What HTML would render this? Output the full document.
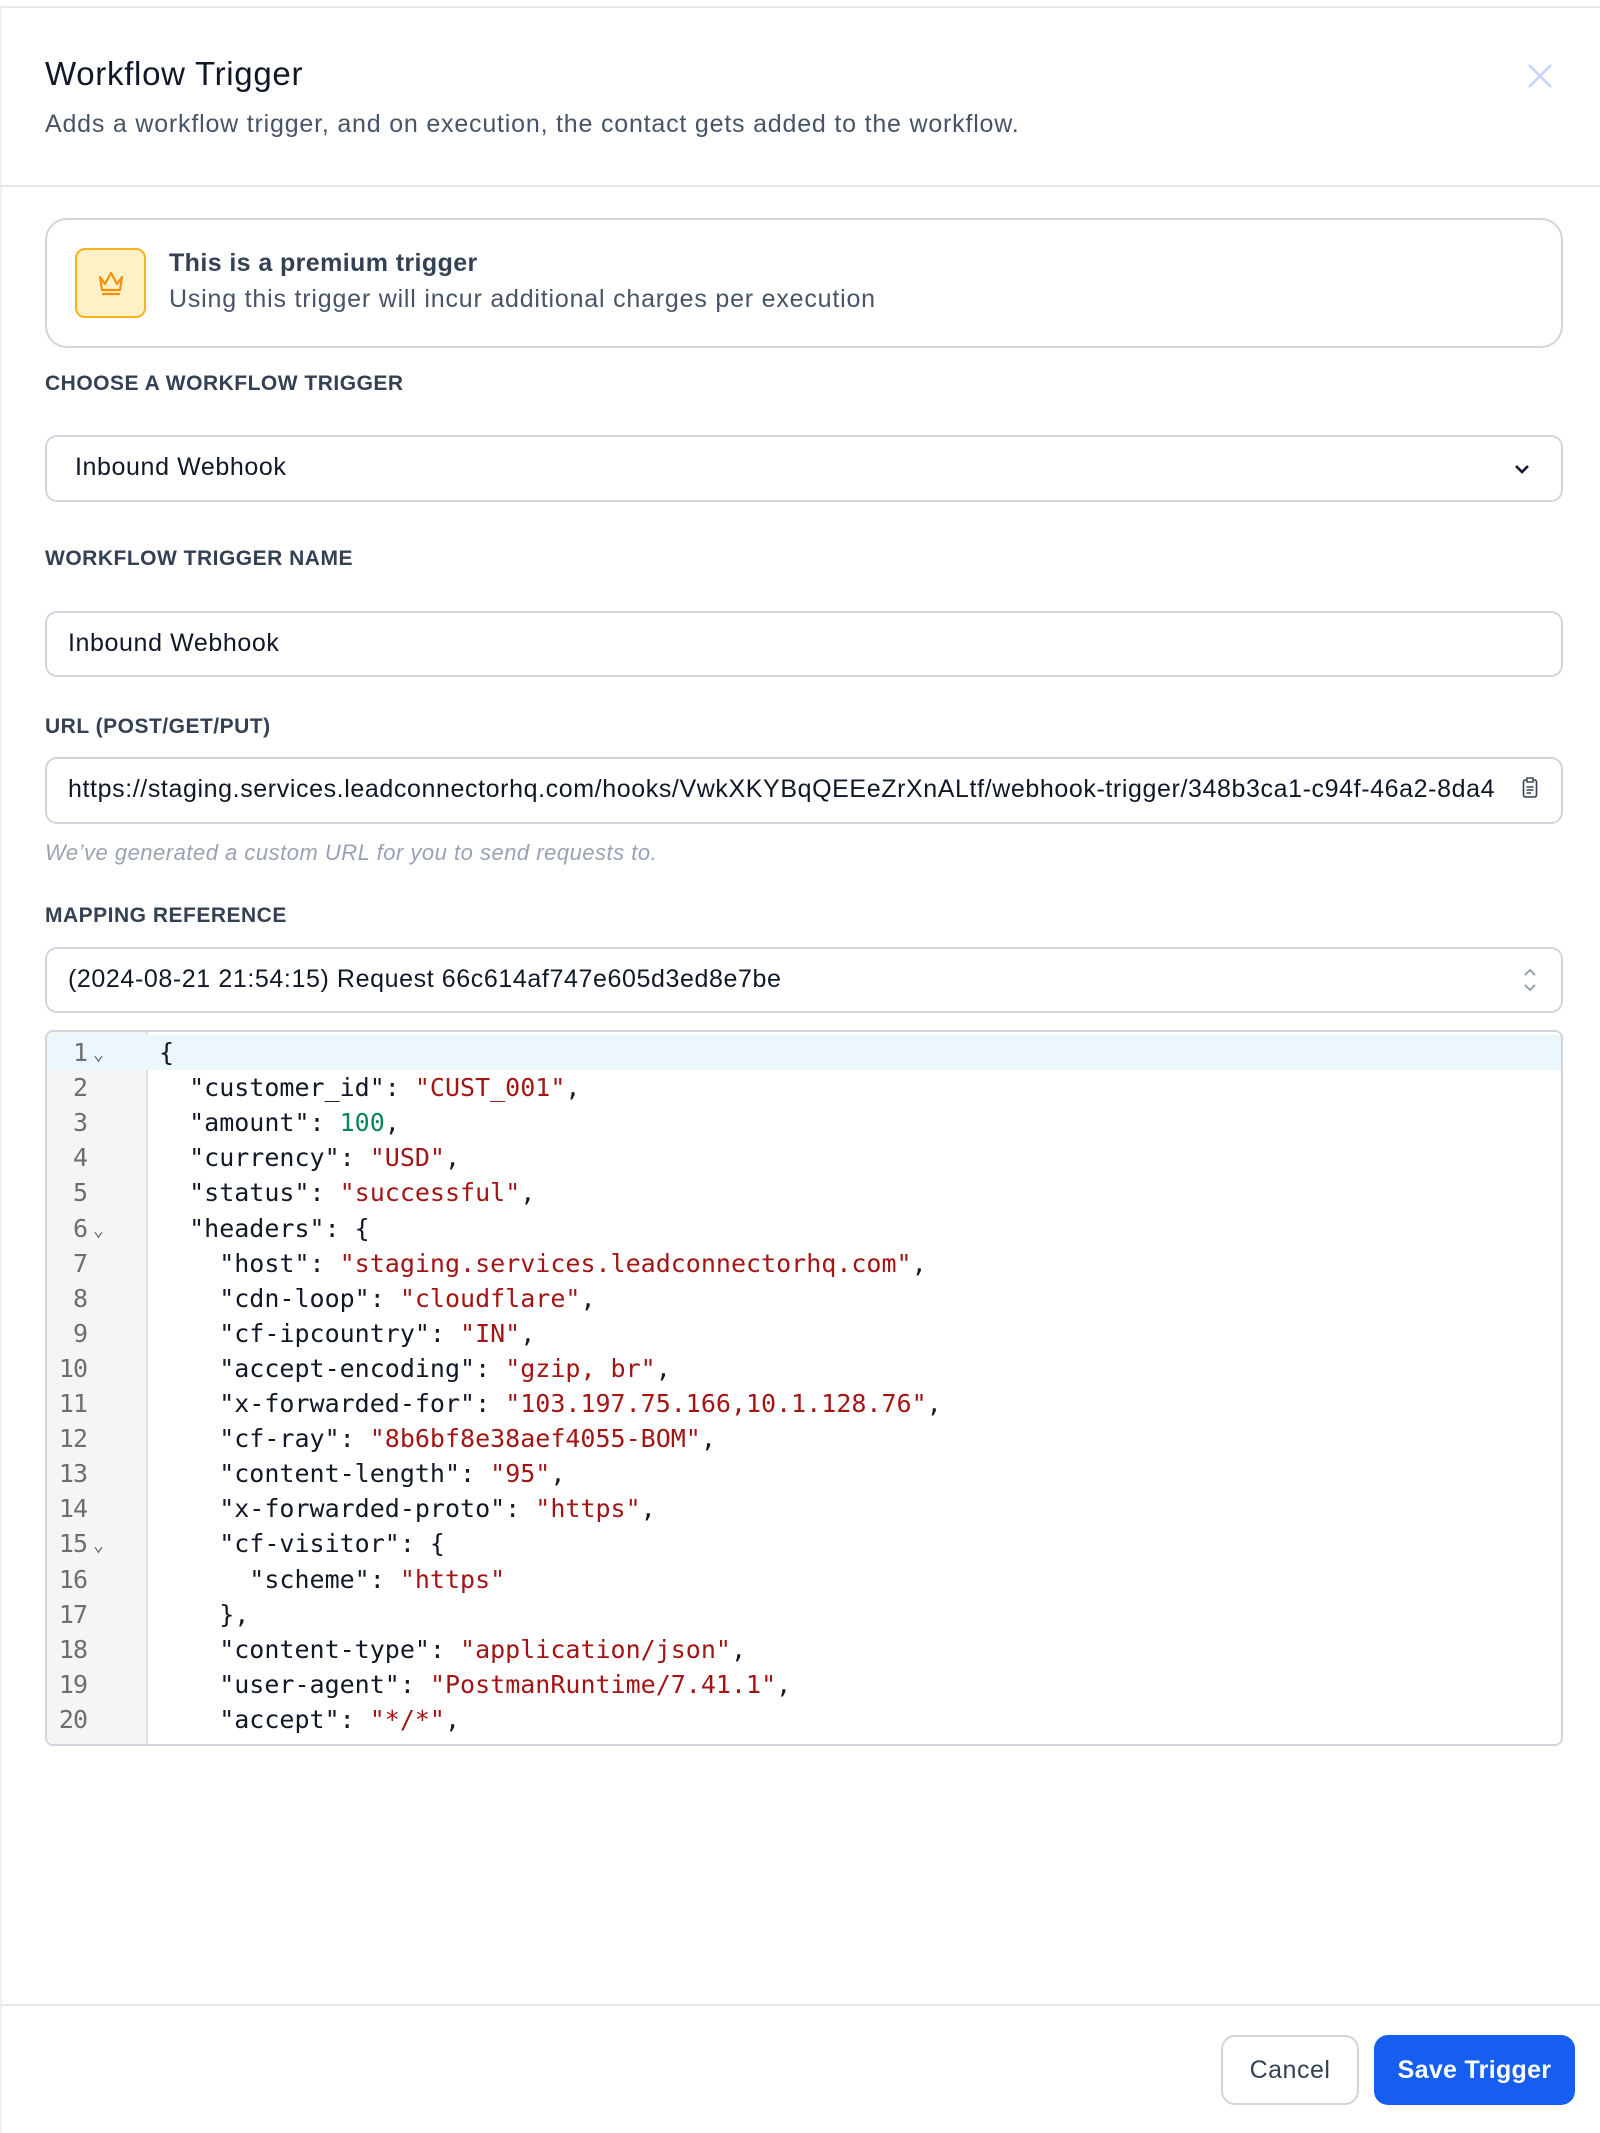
<!DOCTYPE html>
<html><head><meta charset="utf-8"><style>
*{box-sizing:border-box;margin:0;padding:0}
body{width:1600px;height:2133px;background:#fff;font-family:"Liberation Sans",sans-serif;position:relative;overflow:hidden;color:#111827}
.abs{position:absolute}
.topline{left:0;top:6px;width:1600px;height:2px;background:#e5e7eb}
.leftline{left:0;top:6px;width:2px;height:2127px;background:#eef0f3}
.title{left:45px;top:55px;font-size:33px;color:#101828;letter-spacing:0.7px}
.sub{left:45px;top:110px;font-size:25px;color:#475467;letter-spacing:0.8px}
.sep{left:0;width:1600px;height:2px;background:#e5e7eb}
.box{left:45px;width:1518px;border:2px solid #d0d5dd;border-radius:12px;background:#fff}
.label{left:45px;font-size:21px;font-weight:bold;color:#344054;letter-spacing:.5px}
.txt{font-size:25px;color:#101828;white-space:nowrap;letter-spacing:0.6px}
.code{left:45px;top:1030px;width:1518px;height:716px;border:2px solid #d0d5dd;border-radius:8px;overflow:hidden;font-family:"DejaVu Sans Mono","Liberation Mono",monospace;font-size:25px}
.gut{position:absolute;left:0;top:0;width:101px;height:100%;background:#f5f5f5;border-right:2px solid #ddd}
.ln{position:absolute;height:35px;line-height:35px;white-space:pre}
.num{left:0;width:40px;text-align:right;color:#6e6e6e;font-size:25px;letter-spacing:-1px}
.s{color:#a31515}.n{color:#098658}
</style></head><body>
<div class="abs topline"></div><div class="abs leftline"></div>
<div class="abs title">Workflow Trigger</div>
<div class="abs sub">Adds a workflow trigger, and on execution, the contact gets added to the workflow.</div>
<svg class="abs" style="left:1526px;top:62px" width="28" height="28" viewBox="0 0 28 28"><path d="M3 3L25 25M25 3L3 25" stroke="#c7d2fe" stroke-width="2.5" fill="none"/></svg>
<div class="abs sep" style="top:185px"></div>
<div class="abs box" style="top:218px;height:130px;border-radius:22px"></div>
<div class="abs" style="left:75px;top:248px;width:71px;height:70px;background:#fef0c7;border:2px solid #fdb022;border-radius:10px"></div>
<svg class="abs" style="left:94px;top:266px" width="34" height="34" viewBox="0 0 34 34"><path d="M6 11L11 18L17 7L23 18L28 11L26 24H8Z M8 28H26" stroke="#f79009" stroke-width="2.2" fill="none" stroke-linejoin="round"/></svg>
<div class="abs" style="left:169px;top:249px;font-size:25px;font-weight:bold;color:#344054;letter-spacing:0.4px">This is a premium trigger</div>
<div class="abs" style="left:169px;top:285px;font-size:25px;color:#475467;letter-spacing:0.8px">Using this trigger will incur additional charges per execution</div>
<div class="abs label" style="top:372px">CHOOSE A WORKFLOW TRIGGER</div>
<div class="abs box" style="top:435px;height:67px"></div>
<div class="abs txt" style="left:75px;top:453px">Inbound Webhook</div>
<svg class="abs" style="left:1512px;top:459px" width="20" height="20" viewBox="0 0 20 20"><path d="M4 7L10 13L16 7" stroke="#101828" stroke-width="2.6" fill="none"/></svg>
<div class="abs label" style="top:547px">WORKFLOW TRIGGER NAME</div>
<div class="abs box" style="top:611px;height:66px"></div>
<div class="abs txt" style="left:68px;top:629px">Inbound Webhook</div>
<div class="abs label" style="top:715px">URL (POST/GET/PUT)</div>
<div class="abs box" style="top:757px;height:67px"></div>
<div class="abs txt" style="left:68px;top:775px;width:1452px;overflow:hidden">https://staging.services.leadconnectorhq.com/hooks/VwkXKYBqQEEeZrXnALtf/webhook-trigger/348b3ca1-c94f-46a2-8da4</div>
<svg class="abs" style="left:1522px;top:777px" width="16" height="22" viewBox="0 0 16 22"><rect x="1.5" y="3" width="13" height="17" rx="2" stroke="#344054" stroke-width="1.6" fill="none"/><rect x="5" y="1" width="6" height="4" fill="#fff" stroke="#344054" stroke-width="1.4"/><path d="M4.5 10H11.5M4.5 13H11.5M4.5 16H9" stroke="#344054" stroke-width="1.4"/></svg>
<div class="abs" style="left:45px;top:840px;font-size:22px;font-style:italic;color:#98a2b3;letter-spacing:0.5px">We’ve generated a custom URL for you to send requests to.</div>
<div class="abs label" style="top:904px">MAPPING REFERENCE</div>
<div class="abs box" style="top:947px;height:66px"></div>
<div class="abs txt" style="left:68px;top:965px">(2024-08-21 21:54:15) Request 66c614af747e605d3ed8e7be</div>
<svg class="abs" style="left:1520px;top:966px" width="20" height="28" viewBox="0 0 20 28"><path d="M5 9L10 4L15 9M5 19L10 24L15 19" stroke="#98a2b3" stroke-width="2" fill="none"/></svg>
<div class="abs code">
<div class="gut"></div>
<div class="abs" style="left:0;top:3px;width:100%;height:35px;background:#eef6fd"></div>
<div id="c"></div>
</div>
<script>
const L=[
['{'],
['  "customer_id": ','"CUST_001"',','],
['  "amount": ','#100',','],
['  "currency": ','"USD"',','],
['  "status": ','"successful"',','],
['  "headers": {'],
['    "host": ','"staging.services.leadconnectorhq.com"',','],
['    "cdn-loop": ','"cloudflare"',','],
['    "cf-ipcountry": ','"IN"',','],
['    "accept-encoding": ','"gzip, br"',','],
['    "x-forwarded-for": ','"103.197.75.166,10.1.128.76"',','],
['    "cf-ray": ','"8b6bf8e38aef4055-BOM"',','],
['    "content-length": ','"95"',','],
['    "x-forwarded-proto": ','"https"',','],
['    "cf-visitor": {'],
['      "scheme": ','"https"',''],
['    },'],
['    "content-type": ','"application/json"',','],
['    "user-agent": ','"PostmanRuntime/7.41.1"',','],
['    "accept": ','"*/*"',','],
['    "postman-token": ','"a1b2c3d4"',','],
];
const fold=[1,6,15];let h='';
L.forEach((l,i)=>{const t=3+i*35.1;
h+=`<div class="ln num" style="top:${t}px">${i+1}</div>`;
if(fold.includes(i+1))h+=`<div class="ln" style="left:46px;top:${t+2}px;font-size:18px;color:#666">⌄</div>`;
let v=l[1]?(l[1][0]=='#'?`<span class="n">${l[1].slice(1)}</span>`:`<span class="s">${l[1]}</span>`):'';
h+=`<div class="ln" style="left:112px;top:${t}px">${l[0]}${v}${l[2]||''}</div>`;});
document.getElementById('c').innerHTML=h;
</script>
<div class="abs sep" style="top:2004px"></div>
<div class="abs" style="left:1221px;top:2035px;width:138px;height:70px;border:2px solid #d0d5dd;border-radius:14px;font-size:25px;color:#344054;text-align:center;line-height:66px;letter-spacing:0.5px">Cancel</div>
<div class="abs" style="left:1374px;top:2035px;width:201px;height:70px;background:#155eef;border-radius:14px;font-size:25px;color:#fff;font-weight:bold;text-align:center;line-height:70px;letter-spacing:0.3px">Save Trigger</div>
</body></html>
